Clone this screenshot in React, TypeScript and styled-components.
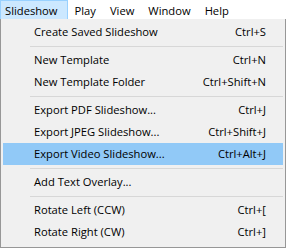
import React from "react";
import styled, { createGlobalStyle } from "styled-components";

const Global = createGlobalStyle`
  body {
    margin: 0;
    background: #ffffff;
    font-family: "Segoe UI", "Open Sans", "Liberation Sans", sans-serif;
    font-size: 11.2px;
    color: #000000;
  }
`;

const Wrap = styled.div`
  width: 287px;
  height: 249px;
  overflow: hidden;
  background: #ffffff;
`;

const MenuBar = styled.div`
  display: flex;
  height: 19px;
  background: #ffffff;
`;

const BarItem = styled.div<{ $open?: boolean }>`
  display: flex;
  align-items: center;
  padding: 0 6px 0 6px;
  height: 19px;
  box-sizing: border-box;
  background: ${(p) => (p.$open ? "#cce8ff" : "transparent")};
  border: 1px solid ${(p) => (p.$open ? "#99d1ff" : "transparent")};
  border-bottom: none;

  &:first-child {
    padding: 0 9px 0 4px;
  }
`;

const Dropdown = styled.div`
  width: 286px;
  box-sizing: border-box;
  background: #f0f0f0;
  border: 1px solid #979797;
  border-top: none;
  padding: 2px 2px 4px;
`;

const Item = styled.div<{ $active?: boolean }>`
  display: grid;
  grid-template-columns: 1fr auto;
  align-items: center;
  height: 22px;
  padding: 0 17px 1px 31px;
  box-sizing: border-box;
  background: ${(p) => (p.$active ? "#91c9f7" : "transparent")};
`;

const Shortcut = styled.span`
  text-align: right;
`;

const Separator = styled.div`
  height: 6px;
  display: flex;
  align-items: center;
  padding-left: 27px;

  &::after {
    content: "";
    flex: 1;
    height: 1px;
    background: #d7d7d7;
  }
`;

type Entry = { label: string; key?: string; active?: boolean } | "sep";

const entries: Entry[] = [
  { label: "Create Saved Slideshow", key: "Ctrl+S" },
  "sep",
  { label: "New Template", key: "Ctrl+N" },
  { label: "New Template Folder", key: "Ctrl+Shift+N" },
  "sep",
  { label: "Export PDF Slideshow...", key: "Ctrl+J" },
  { label: "Export JPEG Slideshow...", key: "Ctrl+Shift+J" },
  { label: "Export Video Slideshow...", key: "Ctrl+Alt+J", active: true },
  "sep",
  { label: "Add Text Overlay..." },
  "sep",
  { label: "Rotate Left (CCW)", key: "Ctrl+[" },
  { label: "Rotate Right (CW)", key: "Ctrl+]" },
];

const App = () => {
  return (
    <Wrap>
      <Global />
      <MenuBar>
        <BarItem $open>Slideshow</BarItem>
        <BarItem>Play</BarItem>
        <BarItem>View</BarItem>
        <BarItem>Window</BarItem>
        <BarItem>Help</BarItem>
      </MenuBar>
      <Dropdown>
        {entries.map((e, i) =>
          e === "sep" ? (
            <Separator key={i} />
          ) : (
            <Item key={i} $active={e.active}>
              <span>{e.label}</span>
              <Shortcut>{e.key}</Shortcut>
            </Item>
          )
        )}
      </Dropdown>
    </Wrap>
  );
};

export default App;
